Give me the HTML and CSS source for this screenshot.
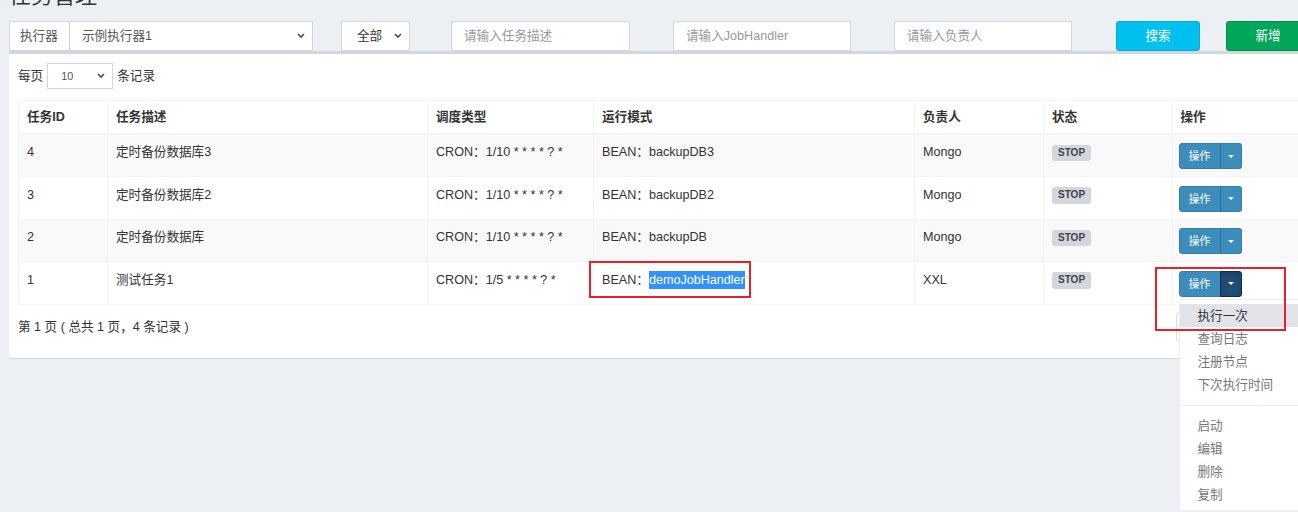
FILE: index.html
```html
<!DOCTYPE html>
<html lang="zh-CN">
<head>
<meta charset="utf-8">
<title>任务管理</title>
<link rel="stylesheet" href="styles.css">
</head>
<body>
<div class="page">
  <h1 class="page-title">任务管理</h1>

  <div class="filters">
    <span class="addon">执行器</span>
    <div class="select sel-exec"><span>示例执行器1</span><svg class="chev" width="8" height="5" viewBox="0 0 8 5"><path d="M1 1l3 3 3-3" fill="none" stroke="#444" stroke-width="1.5"/></svg></div>
    <div class="select sel-status"><span>全部</span><svg class="chev" width="8" height="5" viewBox="0 0 8 5"><path d="M1 1l3 3 3-3" fill="none" stroke="#444" stroke-width="1.5"/></svg></div>
    <div class="input in-1">请输入任务描述</div>
    <div class="input in-2">请输入JobHandler</div>
    <div class="input in-3">请输入负责人</div>
    <div class="btn btn-search">搜索</div>
    <div class="btn btn-add">新增</div>
  </div>

  <div class="box">
    <div class="length">
      <span>每页</span>
      <div class="select sel-len"><span>10</span><svg class="chev" width="8" height="5" viewBox="0 0 8 5"><path d="M1 1l3 3 3-3" fill="none" stroke="#444" stroke-width="1.5"/></svg></div>
      <span>条记录</span>
    </div>

    <table class="jobs">
      <colgroup>
        <col class="c-id"><col class="c-desc"><col class="c-type"><col class="c-mode"><col class="c-owner"><col class="c-state"><col class="c-op">
      </colgroup>
      <thead>
        <tr><th>任务ID</th><th>任务描述</th><th>调度类型</th><th>运行模式</th><th>负责人</th><th>状态</th><th>操作</th></tr>
      </thead>
      <tbody>
        <tr>
          <td>4</td><td>定时备份数据库3</td><td>CRON：1/10 * * * * ? *</td><td>BEAN：backupDB3</td><td>Mongo</td>
          <td><span class="label">STOP</span></td>
          <td><div class="btn-group"><span class="btn-op">操作</span><span class="btn-caret"><i class="caret"></i></span></div></td>
        </tr>
        <tr>
          <td>3</td><td>定时备份数据库2</td><td>CRON：1/10 * * * * ? *</td><td>BEAN：backupDB2</td><td>Mongo</td>
          <td><span class="label">STOP</span></td>
          <td><div class="btn-group"><span class="btn-op">操作</span><span class="btn-caret"><i class="caret"></i></span></div></td>
        </tr>
        <tr>
          <td>2</td><td>定时备份数据库</td><td>CRON：1/10 * * * * ? *</td><td>BEAN：backupDB</td><td>Mongo</td>
          <td><span class="label">STOP</span></td>
          <td><div class="btn-group"><span class="btn-op">操作</span><span class="btn-caret"><i class="caret"></i></span></div></td>
        </tr>
        <tr>
          <td>1</td><td>测试任务1</td><td>CRON：1/5 * * * * ? *</td><td>BEAN：<span class="sel">demoJobHandler</span></td><td>XXL</td>
          <td><span class="label">STOP</span></td>
          <td>
            <div class="btn-group">
              <span class="btn-op">操作</span><span class="btn-caret open"><i class="caret"></i></span>
              <ul class="menu">
                <li class="active">执行一次</li>
                <li>查询日志</li>
                <li>注册节点</li>
                <li>下次执行时间</li>
                <li class="divider"></li>
                <li>启动</li>
                <li>编辑</li>
                <li>删除</li>
                <li>复制</li>
              </ul>
            </div>
          </td>
        </tr>
      </tbody>
    </table>

    <div class="footer">
      <div class="info">第 1 页 ( 总共 1 页，4 条记录 )</div>
      <div class="pagination"><span>上页</span><span>下页</span></div>
    </div>
  </div>

  <div class="annot annot-1"></div>
  <div class="annot annot-2"></div>
</div>
</body>
</html>
```
FILE: styles.css
```css
* { box-sizing: border-box; }
html, body { margin: 0; padding: 0; height: 100%; }
body {
  background: #ecf0f5;
  font-family: "Liberation Sans", "Noto Sans CJK SC", sans-serif;
  font-size: 12.6px;
  line-height: 18px;
  color: #333;
  overflow: hidden;
}
.page {
  position: relative;
  display: flow-root;
  width: 1330px;
  padding-left: 9px;
}
.page-title {
  margin: -16px 0 12.5px 0;
  font-size: 22px;
  line-height: 24px;
  font-weight: normal;
  color: #333;
}

/* filters */
.filters { display: flex; height: 30px; }
.addon {
  width: 61px;
  border: 1px solid #d2d6de;
  background: #fff;
  padding: 0 10px;
  line-height: 28px;
  color: #555;
}
.select {
  display: flex;
  align-items: center;
  justify-content: space-between;
  border: 1px solid #d2d6de;
  background: #fff;
  padding: 0 7px 0 12px;
  color: #555;
}
.chev { display: block; flex: none; }
.sel-exec { width: 243px; border-left: 0; }
.sel-status { width: 69px; margin-left: 28px; padding-left: 15px; color: #333; }
.input {
  border: 1px solid #d2d6de;
  background: #fff;
  padding: 0 12px;
  line-height: 28px;
  color: #999;
}
.in-1 { width: 179px; margin-left: 41px; }
.in-2 { width: 178px; margin-left: 43px; }
.in-3 { width: 178px; margin-left: 43px; }
.btn {
  width: 84px;
  border-radius: 3px;
  color: #fff;
  text-align: center;
  line-height: 28px;
}
.btn-search { margin-left: 44px; background: #00c0ef; border: 1px solid #00acd6; }
.btn-add { margin-left: 26px; background: #00a65a; border: 1px solid #008d4c; }

/* box */
.box {
  width: 1300px;
  background: #fff;
  border-top: 3px solid #d2d6de;
  border-radius: 3px;
  box-shadow: 0 1px 1px rgba(0, 0, 0, 0.1);
  padding: 9px 9px 9px 9px;
}
.length { display: flex; align-items: center; height: 26px; }
.sel-len {
  width: 66px;
  height: 26px;
  margin: 0 4px;
  padding-left: 13px;
  font-size: 10.8px;
  color: #555;
}

/* table */
.jobs {
  width: 1282px;
  margin-top: 11px;
  border-collapse: collapse;
  table-layout: fixed;
  border: 1px solid #f4f4f4;
}
.c-id { width: 89px; }
.c-desc { width: 320px; }
.c-type { width: 166px; }
.c-mode { width: 321px; }
.c-owner { width: 129px; }
.c-state { width: 128.5px; }
.c-op { width: 128.5px; }
.jobs th {
  text-align: left;
  font-weight: bold;
  padding: 7px 8px;
  border: 1px solid #f4f4f4;
  border-bottom-width: 2px;
  vertical-align: bottom;
}
.jobs td {
  padding: 8.5px 8px 7px;
  border: 1px solid #f4f4f4;
  vertical-align: top;
  white-space: nowrap;
}
.jobs tbody tr:nth-child(odd) { background: #f9f9f9; }
.sel {
  display: inline-block;
  background: #3390ff;
  color: #fff;
  line-height: 18px;
}
.label {
  display: block;
  width: fit-content;
  margin-top: 1.5px;
  height: 16.5px;
  padding: 0 6px;
  line-height: 16.5px;
  font-size: 10px;
  font-weight: bold;
  color: #444;
  background: #d2d6de;
  border-radius: 3px;
}
.btn-group {
  position: relative;
  display: flex;
  width: fit-content;
  height: 26px;
  margin-left: -2px;
}
.btn-op {
  width: 42px;
  height: 26px;
  background: #3c8dbc;
  border: 1px solid #367fa9;
  border-radius: 3px 0 0 3px;
  color: #fff;
  font-size: 10.8px;
  line-height: 24px;
  text-align: center;
}
.btn-caret {
  display: flex;
  align-items: center;
  justify-content: center;
  width: 22px;
  height: 26px;
  background: #3c8dbc;
  border: 1px solid #367fa9;
  border-left-color: #2f6f96;
  border-radius: 0 3px 3px 0;
  margin-left: -1px;
}
.btn-caret.open {
  background: #204d74;
  border-color: #122b40;
  box-shadow: inset 0 3px 5px rgba(0, 0, 0, 0.125);
}
.caret {
  display: block;
  width: 0;
  height: 0;
  border-top: 3.6px solid #fff;
  border-left: 3.6px solid transparent;
  border-right: 3.6px solid transparent;
}
.menu {
  position: absolute;
  z-index: 10;
  top: 28.5px;
  left: 0;
  width: 160px;
  margin: 0;
  padding: 4px 0;
  list-style: none;
  background: #fff;
  border: 1px solid #eee;
  border-radius: 3px;
}
.menu li {
  padding: 2.5px 18px;
  line-height: 18px;
  color: #777;
}
.menu li.active { background: #e1e3e9; color: #333; }
.menu li.divider {
  height: 1px;
  padding: 0;
  margin: 8.5px 0;
  background: #eee;
}

/* footer */
.footer { display: flex; margin-top: 7px; margin-bottom: 7px; }
.info { padding-top: 6px; }
.pagination {
  margin-left: auto;
  display: flex;
  width: 124px;
  height: 30px;
  border: 1px solid #ddd;
  border-radius: 3px;
}
.pagination span { flex: 1; text-align: center; line-height: 28px; color: #777; }

/* screenshot annotations */
.annot {
  position: absolute;
  z-index: 20;
  border: 2px solid #e8202a;
}
.annot-1 { left: 589px; top: 261px; width: 162px; height: 37px; }
.annot-2 { left: 1155px; top: 267px; width: 131px; height: 64px; }
```
